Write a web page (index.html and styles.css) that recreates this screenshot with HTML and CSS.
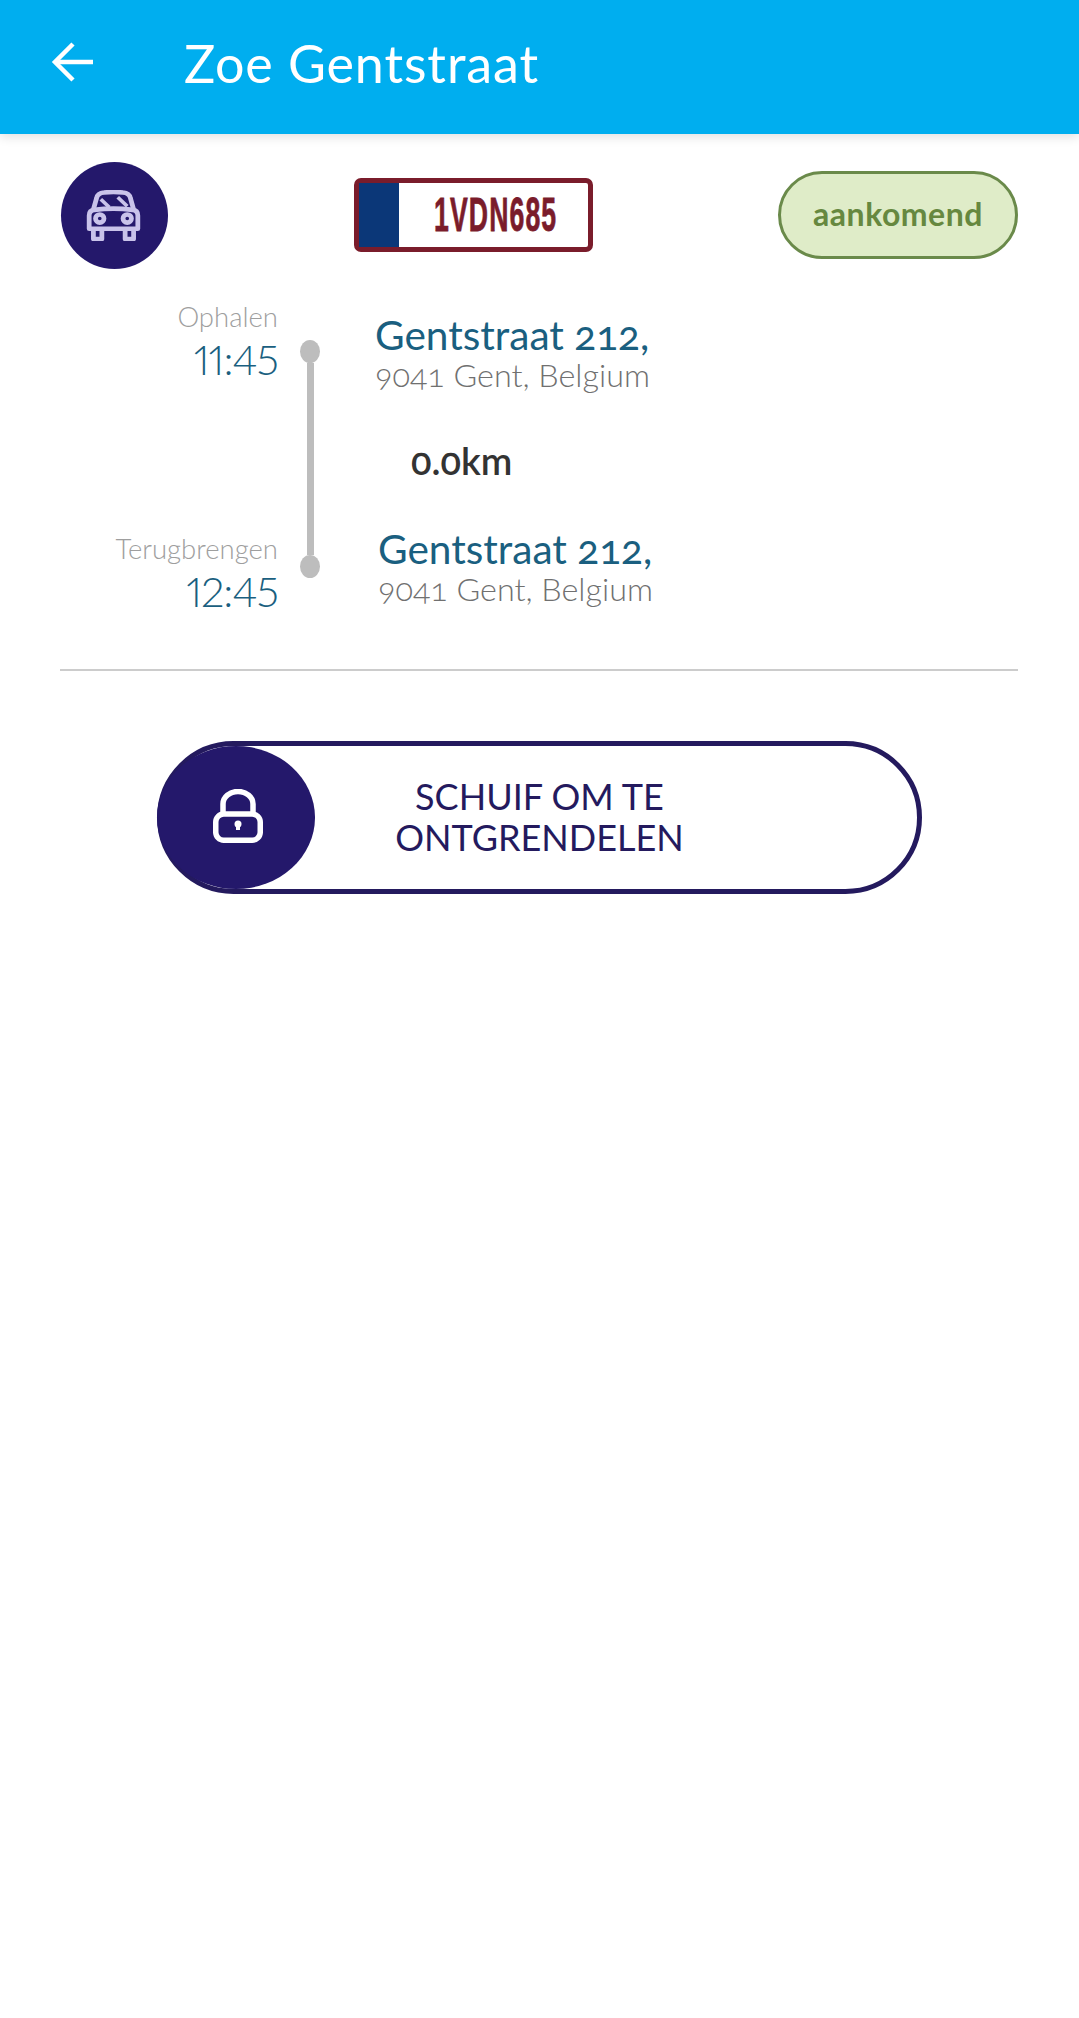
FILE: index.html
```html
<!DOCTYPE html>
<html lang="nl">
<head>
    <meta charset="UTF-8">
    <meta name="viewport" content="width=device-width, initial-scale=1.0">
    <title>Zoe Gentstraat</title>
    <link rel="stylesheet" href="styles.css">
</head>
<body>
    <header class="topbar">
        <svg class="back-icon" viewBox="0 0 42 40" fill="none" stroke="#fff" stroke-width="4.500">
            <path d="M42 20H4"/>
            <path d="M22 2 4 20l18 18"/>
        </svg>
        <h1 class="topbar-title">Zoe Gentstraat</h1>
    </header>

    <main class="content">
        <section class="summary">
            <div class="car-badge">
                <svg class="car-icon" viewBox="0 0 52 50" preserveAspectRatio="none" fill="none" stroke="#c9c3ea" stroke-width="4.500" stroke-linejoin="round">
                    <path d="M7 19 10 8Q11 3 17 2.500 26 1.500 35 2.500 41 3 42 8l3 11"/>
                    <path d="M3 25Q3 20 8 19.500 26 17 44 19.500 49 20 49 25V38H3Z"/>
                    <path d="M7 38v10h8V38M37 38v10h8V38"/>
                    <circle cx="13" cy="28" r="4"/>
                    <circle cx="39" cy="28" r="4"/>
                    <path d="M14 9l8 8M30 7l9 9" stroke-width="3.500"/>
                </svg>
            </div>
            <div class="plate">
                <span class="plate-band"></span>
                <span class="plate-number">1VDN685</span>
            </div>
            <div class="status-pill">aankomend</div>
        </section>

        <section class="trip">
            <div class="trip-times">
                <div class="time-block">
                    <div class="time-label">Ophalen</div>
                    <div class="time-value">11:45</div>
                </div>
                <div class="time-block">
                    <div class="time-label">Terugbrengen</div>
                    <div class="time-value">12:45</div>
                </div>
            </div>
            <div class="trip-track">
                <span class="track-dot"></span>
                <span class="track-line"></span>
                <span class="track-dot"></span>
            </div>
            <div class="trip-places">
                <div class="place">
                    <div class="place-street">Gentstraat 212,</div>
                    <div class="place-city">9041 Gent, Belgium</div>
                </div>
                <div class="trip-distance">0.0km</div>
                <div class="place place-end">
                    <div class="place-street">Gentstraat 212,</div>
                    <div class="place-city">9041 Gent, Belgium</div>
                </div>
            </div>
        </section>

        <hr class="divider">

        <div class="slider">
            <div class="slider-knob">
                <svg class="lock-icon" viewBox="0 0 50 54" fill="none" stroke="#fff" stroke-width="5.500">
                    <path d="M10 26V15a15 12.500 0 0 1 30 0v11"/>
                    <rect x="2.750" y="25" width="44.500" height="26.250" rx="8"/>
                    <path d="M25 36v5" stroke-width="4"/>
                    <circle cx="25" cy="35" r="3.500" fill="#fff" stroke="none"/>
                </svg>
            </div>
            <div class="slider-text">SCHUIF OM TE<br>ONTGRENDELEN</div>
        </div>
    </main>
</body>
</html>
```

FILE: styles.css
```css
/* Estilos generales */
body {
    margin: 0;
    min-height: 2018px;
    background: #fff;
    font-family: 'Lato', 'Liberation Sans', sans-serif;
    font-variant-numeric: oldstyle-nums;
}

/* Barra superior */
.topbar {
    height: 134px;
    display: flex;
    align-items: center;
    padding-left: 51px;
    background: #00aeef;
    box-shadow: 0 3px 10px rgba(0, 0, 0, 0.12);
}

.back-icon {
    width: 42px;
    height: 40px;
    margin-top: -10px;
}

.topbar-title {
    margin: -8px 0 0 91px;
    color: #fff;
    font-size: 52px;
    font-weight: 400;
    letter-spacing: 0.9px;
    line-height: 60px;
    white-space: nowrap;
}

.content {
    padding: 28px 61px 0 60px;
}

/* Coche, matricula y estado */
.summary {
    display: flex;
    justify-content: space-between;
    align-items: center;
    height: 106px;
    padding-left: 1px;
}

.car-badge {
    width: 107px;
    height: 107px;
    display: flex;
    align-items: center;
    justify-content: center;
    border-radius: 50%;
    background: #24186b;
}

.car-icon {
    width: 55px;
    height: 51px;
    margin-right: 3px;
}

.plate {
    width: 239px;
    height: 74px;
    box-sizing: border-box;
    display: flex;
    align-items: center;
    border: 5px solid #7a1c2b;
    border-radius: 7px;
    background: #fff;
}

.plate-band {
    flex: none;
    width: 40px;
    height: 100%;
    background: #0b3778;
}

.plate-number {
    display: inline-block;
    margin-left: 35px;
    color: #7a1c2b;
    font-family: 'Liberation Sans Narrow', 'Liberation Sans', sans-serif;
    font-size: 48px;
    font-weight: 700;
    line-height: 50px;
    letter-spacing: 2px;
    transform: scaleX(0.555);
    transform-origin: left center;
    font-variant-numeric: normal;
    -webkit-text-stroke: 0.8px #7a1c2b;
}

.status-pill {
    width: 240px;
    height: 88px;
    box-sizing: border-box;
    padding-bottom: 3px;
    display: flex;
    align-items: center;
    justify-content: center;
    border: 3px solid #6a8a4a;
    border-radius: 44px;
    background: #dfecc8;
    color: #66883f;
    font-size: 32px;
    font-weight: 700;
    letter-spacing: 0.5px;
}

/* Recorrido */
.trip {
    display: flex;
    align-items: flex-start;
    margin-top: 30px;
    height: 371px;
}

.trip-times {
    width: 218px;
    height: 316px;
    margin-top: 1px;
    display: flex;
    flex-direction: column;
    justify-content: space-between;
    text-align: right;
}

.time-label {
    color: #9e9e9e;
    font-size: 27.500px;
    font-weight: 300;
    line-height: 36px;
}

.time-value {
    color: #1a5f80;
    font-size: 42px;
    font-weight: 300;
    letter-spacing: -1px;
    line-height: 48px;
    font-variant-numeric: lining-nums proportional-nums;
}

.trip-track {
    width: 20px;
    margin: 42px 0 0 22px;
    height: 238px;
    display: flex;
    flex-direction: column;
    align-items: center;
}

.track-dot {
    width: 20px;
    height: 23px;
    border-radius: 50%;
    background: #bdbdbd;
}

.track-line {
    flex: 1;
    width: 7px;
    background: #bdbdbd;
}

.trip-places {
    margin: 13px 0 0 55px;
}

.place-street {
    color: #1a5f80;
    font-size: 40.600px;
    line-height: 48px;
    white-space: nowrap;
}

.place-city {
    color: #707070;
    font-size: 32.300px;
    font-weight: 300;
    line-height: 32px;
    white-space: nowrap;
}

.place-end {
    margin-left: 3px;
}

.trip-distance {
    margin: 48px 0 44px 36px;
    color: #333;
    font-size: 38px;
    font-weight: 600;
    line-height: 42px;
}

.divider {
    margin: 0;
    border: 0;
    border-top: 2px solid #ccc;
}

/* Control deslizante */
.slider {
    position: relative;
    width: 765px;
    height: 153px;
    box-sizing: border-box;
    margin: 70px 0 0 97px;
    display: flex;
    align-items: center;
    justify-content: center;
    border: 5px solid #241a5e;
    border-radius: 77px;
}

.slider-knob {
    position: absolute;
    left: -5px;
    top: 0;
    width: 158px;
    height: 143px;
    box-sizing: border-box;
    padding: 0 0 4px 4px;
    display: flex;
    align-items: center;
    justify-content: center;
    border-radius: 50%;
    background: #24186b;
}

.lock-icon {
    width: 50px;
    height: 54px;
}

.slider-text {
    margin-top: -2px;
    color: #241a5e;
    font-size: 36px;
    line-height: 41px;
    text-align: center;
}
```
